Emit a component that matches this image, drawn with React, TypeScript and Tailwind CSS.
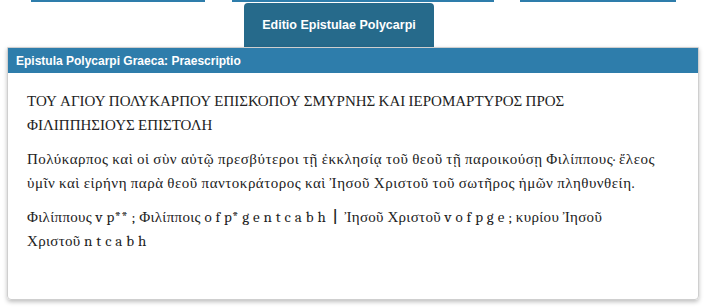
export default function App() {
  return (
    <main className="w-[706px] h-[308px] bg-white overflow-hidden font-['Liberation_Sans']">
      <div className="flex h-[2px]">
        <div className="ml-[31px] w-[174px] bg-[#2e7dab]" />
        <div className="ml-[27px] w-[262px] bg-[#2e7dab]" />
        <div className="ml-[26px] w-[156px] bg-[#2e7dab]" />
      </div>
      <div className="mt-[1px] ml-[244px] w-[190px] h-[44px] rounded-t-[4px] bg-[#266a8b] flex items-center justify-center">
        <span className="text-[12.5px] font-bold text-white">Editio Epistulae Polycarpi</span>
      </div>
      <section className="mx-[7px] border border-[#cfcfcf] rounded-b-[4px] shadow-[0_2px_4px_rgba(0,0,0,0.25)] h-[253px]">
        <h2 className="h-[25px] bg-[#2e7dab] text-white text-[12px] font-bold px-[8px] flex items-center">
          Epistula Polycarpi Graeca: Praescriptio
        </h2>
        <div className="px-[19px] pt-[16px] font-serif text-[15px] leading-[24px] text-[#222]">
          <p className="mb-[10px]">
            ΤΟΥ ΑΓΙΟΥ ΠΟΛΥΚΑΡΠΟΥ ΕΠΙΣΚΟΠΟΥ ΣΜΥΡΝΗΣ ΚΑΙ ΙΕΡΟΜΑΡΤΥΡΟΣ ΠΡΟΣ<br />
            ΦΙΛΙΠΠΗΣΙΟΥΣ ΕΠΙΣΤΟΛΗ
          </p>
          <p className="mb-[10px] tracking-[0.5px]">
            Πολύκαρπος καὶ οἱ σὺν αὐτῷ πρεσβύτεροι τῇ ἐκκλησίᾳ τοῦ θεοῦ τῇ παροικούσῃ Φιλίππους· ἔλεος<br />
            ὑμῖν καὶ εἰρήνη παρὰ θεοῦ παντοκράτορος καὶ Ἰησοῦ Χριστοῦ τοῦ σωτῆρος ἡμῶν πληθυνθείη.
          </p>
          <p className="tracking-[0.3px]">
            Φιλίππους v p** ; Φιλίπποις o f p* g e n t c a b h <span className="px-[3px] font-bold">|</span> Ἰησοῦ Χριστοῦ v o f p g e ; κυρίου Ἰησοῦ<br />
            Χριστοῦ n t c a b h
          </p>
        </div>
      </section>
    </main>
  );
}
